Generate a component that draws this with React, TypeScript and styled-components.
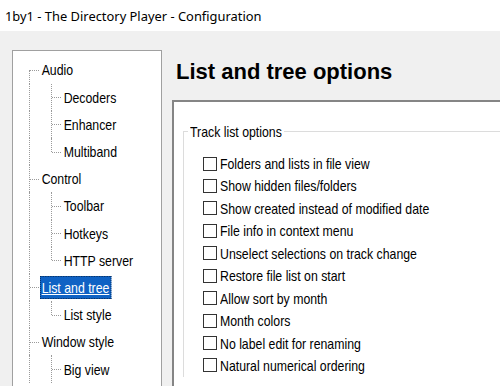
import React from 'react';
import styled, { createGlobalStyle, css } from 'styled-components';

const Global = createGlobalStyle`
  html, body { margin: 0; padding: 0; background: #f0f0f0; overflow: hidden; }
  body { width: 500px; height: 386px; }
  *, *::before, *::after { box-sizing: border-box; }
`;

const SANS = `"Liberation Sans", Arial, sans-serif`;

/* The reference uses a narrow face (Arial Narrow-like); emulate with Arial metrics squeezed. */
const Narrow = styled.span<{ $trim?: number }>`
  display: inline-block;
  transform: scaleX(0.82);
  transform-origin: 0 50%;
  margin-right: ${(p) => (p.$trim ? `-${p.$trim}px` : '0')};
`;

const Window = styled.div`
  width: 500px;
  height: 386px;
  display: flex;
  flex-direction: column;
  background: #f0f0f0;
  overflow: hidden;
`;

const TitleBar = styled.div`
  height: 31px;
  flex: none;
  background: #ffffff;
  display: flex;
  align-items: center;
  padding-left: 5px;
  font-family: "Noto Sans", "Liberation Sans", sans-serif;
  font-size: 12.9px;
  color: #000;
  white-space: nowrap;
`;

const Main = styled.div`
  flex: 1;
  min-height: 0;
  display: flex;
  gap: 10px;
  padding: 19px 0 0 12px;
  overflow: hidden;
`;

const Tree = styled.div`
  width: 150px;
  flex: none;
  background: #ffffff;
  border: 1px solid #a0a0a0;
  border-bottom: none;
  padding: 5.4px 0 0 5px;
  font-family: ${SANS};
  font-size: 15px;
  color: #000;
`;

const TreeRow = styled.div`
  height: 27.2px;
  display: flex;
  align-items: center;
`;

type GuideKind = 'pass' | 'branch' | 'last' | 'first';

const Guide = styled.span<{ $kind: GuideKind }>`
  position: relative;
  width: 22px;
  flex: none;
  align-self: stretch;
  &::before {
    content: '';
    position: absolute;
    left: 11px;
    top: ${(p) => (p.$kind === 'first' ? '50%' : '0')};
    bottom: ${(p) => (p.$kind === 'last' ? '50%' : '0')};
    border-left: 1px dotted #9a9a9a;
  }
  ${(p) =>
    p.$kind !== 'pass' &&
    css`
      &::after {
        content: '';
        position: absolute;
        left: 12px;
        width: 9px;
        top: 50%;
        border-top: 1px dotted #9a9a9a;
      }
    `}
`;

const NodeLabel = styled.span<{ $selected?: boolean }>`
  display: inline-block;
  line-height: 21px;
  padding: 0 1px;
  border: 1px solid transparent;
  white-space: nowrap;
  transform: scaleX(0.82);
  transform-origin: 0 50%;
  ${(p) =>
    p.$selected &&
    css`
      background: #0f62c4;
      color: #ffffff;
      text-decoration: underline;
      border: 1px dotted #082c58;
    `}
`;

const Right = styled.div`
  flex: 1;
  min-width: 0;
  display: flex;
  flex-direction: column;
  margin-right: -20px;
`;

const Heading = styled.h1`
  margin: 9px 0 16px 4px;
  font-family: ${SANS};
  font-weight: bold;
  font-size: 22px;
  line-height: 25px;
  color: #000;
  white-space: nowrap;
`;

const Content = styled.div`
  flex: 1;
  background: #ffffff;
  border-top: 2px solid #858585;
  border-left: 2px solid #858585;
  padding: 20.5px 0 0 9px;
`;

const Group = styled.fieldset`
  margin: 0;
  padding: 0 0 0 19px;
  border: 1px solid #dcdcdc;
  border-right: none;
  border-bottom: none;
  min-width: 0;
`;

const Legend = styled.legend`
  margin-left: -15px;
  padding: 0 2px;
  font-family: ${SANS};
  font-size: 15px;
  line-height: 17px;
  color: #000;
  white-space: nowrap;
`;

const OptionList = styled.div`
  margin-top: 12.8px;
  display: flex;
  flex-direction: column;
`;

const CheckRow = styled.label`
  height: 22.44px;
  display: flex;
  align-items: center;
  gap: 3px;
  font-family: ${SANS};
  font-size: 15px;
  color: #000;
  white-space: nowrap;
`;

const Box = styled.span`
  width: 14px;
  height: 14px;
  border: 1px solid #333333;
  background: #ffffff;
  flex: none;
`;

type Node = { label: string; guides: GuideKind[]; selected?: boolean };

const nodes: Node[] = [
  { label: 'Audio', guides: ['first'] },
  { label: 'Decoders', guides: ['pass', 'branch'] },
  { label: 'Enhancer', guides: ['pass', 'branch'] },
  { label: 'Multiband', guides: ['pass', 'last'] },
  { label: 'Control', guides: ['branch'] },
  { label: 'Toolbar', guides: ['pass', 'branch'] },
  { label: 'Hotkeys', guides: ['pass', 'branch'] },
  { label: 'HTTP server', guides: ['pass', 'last'] },
  { label: 'List and tree', guides: ['branch'], selected: true },
  { label: 'List style', guides: ['pass', 'last'] },
  { label: 'Window style', guides: ['branch'] },
  { label: 'Big view', guides: ['pass', 'branch'] },
];

const options = [
  'Folders and lists in file view',
  'Show hidden files/folders',
  'Show created instead of modified date',
  'File info in context menu',
  'Unselect selections on track change',
  'Restore file list on start',
  'Allow sort by month',
  'Month colors',
  'No label edit for renaming',
  'Natural numerical ordering',
];

export default function App() {
  return (
    <>
      <Global />
      <Window>
        <TitleBar>1by1 - The Directory Player - Configuration</TitleBar>
        <Main>
          <Tree>
            {nodes.map((n) => (
              <TreeRow key={n.label}>
                {n.guides.map((g, i) => (
                  <Guide key={i} $kind={g} />
                ))}
                <NodeLabel $selected={n.selected}>{n.label}</NodeLabel>
              </TreeRow>
            ))}
          </Tree>
          <Right>
            <Heading>List and tree options</Heading>
            <Content>
              <Group>
                <Legend>
                  <Narrow $trim={20}>Track list options</Narrow>
                </Legend>
                <OptionList>
                  {options.map((o) => (
                    <CheckRow key={o}>
                      <Box />
                      <Narrow>{o}</Narrow>
                    </CheckRow>
                  ))}
                </OptionList>
              </Group>
            </Content>
          </Right>
        </Main>
      </Window>
    </>
  );
}
